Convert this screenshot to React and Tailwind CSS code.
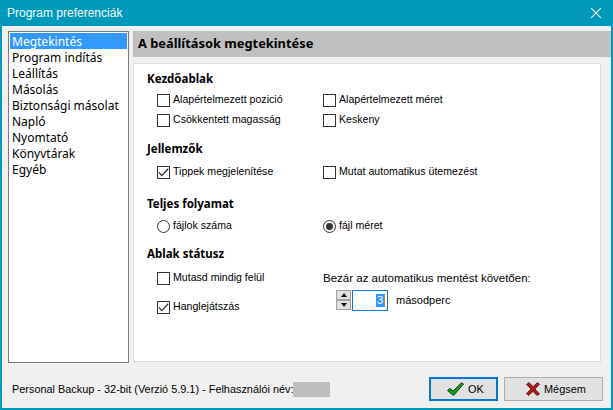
import React from 'react';

const menuItems = ['Megtekintés', 'Program indítás', 'Leállítás', 'Másolás', 'Biztonsági másolat', 'Napló', 'Nyomtató', 'Könyvtárak', 'Egyéb'];

// --- Icônes ---
const TickMark = () => (
  <svg className="w-[11px] h-[9px]" viewBox="0 0 11 9" fill="none" stroke="#2b2b2b" strokeWidth="1.3">
    <path d="M0.8 4.4 L3.8 7.6 L10.2 0.8" />
  </svg>
);

const OkIcon = () => (
  <svg className="w-[17px] h-[14px]" viewBox="0 0 17 14">
    <path d="M0.5 8.5 L3 6.5 L6 9 L14.5 0.8 L16.5 2 L6.5 13.5 Z" fill="#12a012" stroke="#0b3d2a" strokeWidth="1" strokeLinejoin="round" />
  </svg>
);

const CancelIcon = () => (
  <svg className="w-[14px] h-[14px]" viewBox="0 0 14 14">
    <path d="M0.5 2.5 L3 0.6 L7 4.6 L11.5 0.6 L13.5 2.2 L9 7 L13.5 12 L11 13.5 L7 9.4 L2.5 13.5 L0.5 11.6 L5 7 Z" fill="#a81c1c" stroke="#5e1010" strokeWidth="0.8" strokeLinejoin="round" />
  </svg>
);

const Check = ({ label, checked, className = 'w-[166px]' }) => (
  <div className={`flex items-center h-5 ${className}`}>
    <span className="w-[13px] h-[13px] border border-[#333333] bg-white flex items-center justify-center shrink-0">
      {checked && <TickMark />}
    </span>
    <span className="ml-[3px] whitespace-nowrap">{label}</span>
  </div>
);

const Radio = ({ label, checked, className = 'w-[166px]' }) => (
  <div className={`flex items-center h-5 ${className}`}>
    <span className="w-[13px] h-[13px] rounded-full border border-[#333333] bg-white flex items-center justify-center shrink-0">
      {checked && <span className="w-[7px] h-[7px] rounded-full bg-[#333333]" />}
    </span>
    <span className="ml-[3px] whitespace-nowrap">{label}</span>
  </div>
);

const Heading = ({ children, className = '' }) => (
  <h3 className={`h-4 leading-4 font-['Noto_Sans',sans-serif] font-bold text-[11.5px] ${className}`}>{children}</h3>
);

export default function App() {
  return (
    <div className="w-[613px] h-[410px] flex flex-col bg-[#f0f0f0] border-x-2 border-b-2 border-[#0099bc] text-black text-[10.6px] overflow-hidden font-['Liberation_Sans',Arial,sans-serif]">
      {/* title bar */}
      <header className="h-[26px] shrink-0 bg-[#0099bc] flex items-center justify-between pl-[5px] pr-[10px] text-[12px] text-[#f4fbfd]">
        <span>Program preferenciák</span>
        <svg className="w-[10px] h-[10px]" viewBox="0 0 10 10" stroke="#ffffff" strokeWidth="1.1"><path d="M0 0 L10 10 M10 0 L0 10" /></svg>
      </header>

      <div className="flex flex-1 min-h-0 pt-[5px] pl-[6px]">
        {/* list */}
        <ul className="w-[121px] h-[332px] shrink-0 bg-white border border-[#7a7a7a] p-px font-['Noto_Sans',sans-serif] text-[12px] leading-4">
          {menuItems.map((item, i) => (
            <li key={item} className={`h-4 pl-[2px] pt-px whitespace-nowrap ${i === 0 ? 'bg-[#3399ff] text-white' : ''}`}>{item}</li>
          ))}
        </ul>

        <main className="ml-1 flex-1 min-w-0">
          <div className="h-[26px] bg-[#c0c0c0] flex items-center pl-[5px] font-['Noto_Sans',sans-serif] font-bold text-[12.85px]">A beállítások megtekintése</div>
          <div className="h-[299px] mt-[6px] mr-[10px] bg-white border border-[#dcdcdc] pl-[13px] pt-[7px]">
            <Heading>Kezdőablak</Heading>
            <div className="ml-[10px] mt-[3px]">
              <div className="flex">
                <Check label="Alapértelmezett pozició" />
                <Check label="Alapértelmezett méret" />
              </div>
              <div className="flex">
                <Check label="Csökkentett magasság" />
                <Check label="Keskeny" />
              </div>
            </div>

            <Heading className="mt-[11px]">Jellemzők</Heading>
            <div className="flex ml-[10px] mt-[5px]">
              <Check label="Tippek megjelenítése" checked />
              <Check label="Mutat automatikus ütemezést" />
            </div>

            <Heading className="mt-[14px]">Teljes folyamat</Heading>
            <div className="flex ml-[10px] mt-1">
              <Radio label="fájlok száma" />
              <Radio label="fájl méret" checked />
            </div>

            <Heading className="mt-[10px]">Ablak státusz</Heading>
            <div className="flex ml-[10px] mt-[6px]">
              <div className="w-[166px]">
                <Check label="Mutasd mindig felül" />
                <Check label="Hanglejátszás" checked className="mt-[9px] w-[166px]" />
              </div>
              <div>
                <div className="h-5 leading-5 whitespace-nowrap text-[11.5px]">Bezár az automatikus mentést követően:</div>
                <div className="flex items-center h-5 mt-[2px] ml-[13px]">
                  <div className="w-[15px] h-5 flex flex-col shrink-0">
                    <span className="h-[10px] bg-[#e1e1e1] border border-[#a0a0a0] flex items-center justify-center">
                      <span className="w-0 h-0 border-x-[3px] border-x-transparent border-b-[4px] border-b-black" />
                    </span>
                    <span className="h-[10px] bg-[#e1e1e1] border border-[#a0a0a0] flex items-center justify-center">
                      <span className="w-0 h-0 border-x-[3px] border-x-transparent border-t-[4px] border-t-black" />
                    </span>
                  </div>
                  <div className="w-[36px] h-[21px] ml-px border border-[#0078d7] bg-white flex items-center justify-end pr-[2px] text-[11px]">
                    <span className="bg-[#3399ff] text-white leading-[13px] px-px border-r border-r-[#d97a1e]">3</span>
                  </div>
                  <span className="ml-2 text-[11px]">másodperc</span>
                </div>
              </div>
            </div>
          </div>
        </main>
      </div>

      {/* footer */}
      <footer className="h-[44px] shrink-0 flex items-start pl-[10px] pr-[8px] pt-[13px] text-[10.9px]">
        <div className="flex items-center h-6 whitespace-nowrap">
          <span>Personal Backup - 32-bit (Verzió 5.9.1) - Felhasználói név:</span>
          <span className="w-[37px] h-[15px] bg-[#bebebe]" />
        </div>
        <button className="ml-auto w-[69px] h-6 bg-[#e1e1e1] border-2 border-[#0078d7] flex items-center justify-start pl-4 gap-1">
          <OkIcon /><span>OK</span>
        </button>
        <button className="ml-[6px] w-[99px] h-6 bg-[#e1e1e1] border border-[#adadad] flex items-center justify-start pl-[21px] gap-1">
          <CancelIcon /><span>Mégsem</span>
        </button>
      </footer>
    </div>
  );
}
